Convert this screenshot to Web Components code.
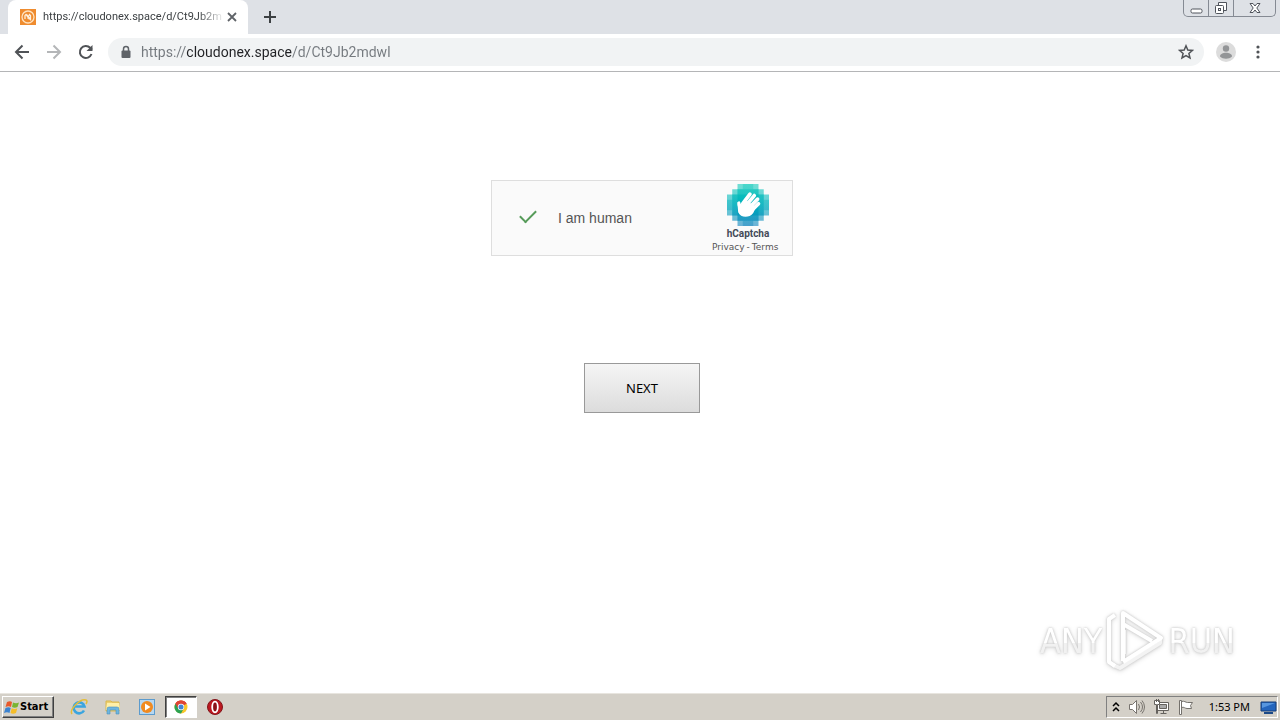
<!DOCTYPE html>
<html lang="en">
<head>
<meta charset="utf-8">
<title>https://cloudonex.space/d/Ct9Jb2mdwI</title>
<style>
html, body { margin: 0; height: 100%; }
body { font-family: "Noto Sans", "Open Sans", sans-serif; background: #fff; }
</style>
</head>
<body>
<desktop-screen></desktop-screen>

<script>
const define = (name, html) => {
  const template = document.createElement('template');
  template.innerHTML = `<style>*{box-sizing:border-box} button{font:inherit;color:inherit;padding:0;margin:0;border:0;background:none} svg{display:block;flex:none}</style>${html}`;
  customElements.define(name, class extends HTMLElement {
    constructor() {
      super();
      this.attachShadow({ mode: 'open' }).append(template.content.cloneNode(true));
    }
  });
};

define('tab-strip', `
<style>
:host { display: flex; height: 34px; background: #dee1e6; align-items: flex-start; padding-left: 8px; }
.tab { display: flex; align-items: center; width: 240px; height: 34px; background: #fff; border-radius: 8px 8px 0 0; padding: 0 8px 0 12px; }
.title { width: 180px; margin-left: 7px; font: 11px/16px "Roboto", sans-serif; color: #3c4043; white-space: nowrap; -webkit-mask-image: linear-gradient(90deg, #000 155px, transparent 182px); mask-image: linear-gradient(90deg, #000 155px, transparent 182px); }
.close { width: 16px; height: 16px; margin-left: 1px; }
.new { width: 28px; height: 34px; margin-left: 8px; padding: 0 8px; }
.window { display: flex; height: 17px; margin-left: auto; margin-right: 4px; border: 1px solid #858a93; border-top: 0; border-radius: 0 0 5px 5px; color: #50545c; }
.window button { height: 16px; width: 25px; display: grid; place-items: center; }
.window button:first-child { width: 24px; }
.window button + button { border-left: 1px solid #858a93; }
.window button:last-child { width: 42px; }
</style>
<div class="tab">
  <svg width="16" height="16" viewBox="0 0 16 16"><rect width="16" height="16" fill="#ef8c2f"/><circle cx="8" cy="8" r="6" fill="none" stroke="#ffe3c0" stroke-width="1.3"/><path d="M5 10V6.500l1-1 3.500 5M6.500 5.500l4 5V6.500l-1-1-2 4" fill="none" stroke="#fff0dc" stroke-width="1.3"/></svg>
  <span class="title">https://cloudonex.space/d/Ct9Jb2m</span>
  <button class="close" aria-label="Close tab"><svg width="16" height="16"><path d="M4 4l8 8M12 4l-8 8" stroke="#5f6368" stroke-width="1.8"/></svg></button>
</div>
<button class="new" aria-label="New tab"><svg width="12" height="12"><path d="M6 0v12M0 6h12" stroke="#3c4043" stroke-width="2"/></svg></button>
<div class="window">
  <button aria-label="Minimize"><svg width="13" height="14"><rect x="1" y="8" width="11" height="4" rx="1.500" fill="#fff" stroke="currentColor"/></svg></button>
  <button aria-label="Restore"><svg width="14" height="14"><path d="M4.500 4V1.500h8v8H10" fill="#fff" stroke="currentColor"/><rect x="1.500" y="4.500" width="8" height="8" rx="1" fill="#fff" stroke="currentColor"/><rect x="4.500" y="7.500" width="2" height="2" fill="none" stroke="currentColor"/></svg></button>
  <button aria-label="Close"><svg width="12" height="12"><path d="M1 1.500h3l2 2.500 2-2.500h3L7.800 6 11 10.500H8L6 8l-2 2.500H1L4.200 6z" fill="#fff" stroke="currentColor"/></svg></button>
</div>`);

define('address-bar', `
<style>
:host { display: flex; align-items: center; height: 38px; background: #fff; border-bottom: 1px solid #b4b5b7; padding: 0 13px 2px 14px; }
.nav { width: 16px; height: 16px; margin-right: 16px; }
.reload { margin-right: 14px; }
.box { flex: 1; display: flex; align-items: center; height: 28px; border-radius: 14px; background: #f1f3f4; padding: 0 10px 0 12px; }
input { flex: 1; min-width: 0; height: 24px; margin: 0 0 0 9px; padding: 0; border: 0; outline: 0; font: 14px/20px "Roboto", sans-serif; color: #5f6368; background: linear-gradient(90deg, #74797e 45px, #202124 45px 151px, #74797e 151px); -webkit-background-clip: text; background-clip: text; -webkit-text-fill-color: transparent; }
.avatar { margin: 0 13px 0 12px; }
</style>
<button class="nav" aria-label="Back"><svg width="16" height="16"><path d="M15 8H2M8.500 1.500L2 8l6.500 6.500" fill="none" stroke="#505357" stroke-width="2"/></svg></button>
<button class="nav" aria-label="Forward"><svg width="16" height="16"><path d="M1 8h13M7.500 1.500L14 8l-6.500 6.500" fill="none" stroke="#b4b6b8" stroke-width="2"/></svg></button>
<button class="nav reload" aria-label="Reload"><svg width="16" height="16"><path d="M13.500 10A6 6 0 1 1 12.200 3.800L14 5.600" fill="none" stroke="#505357" stroke-width="2"/><path d="M14.500 1v6h-6z" fill="#505357"/></svg></button>
<div class="box">
  <svg width="12" height="14"><path d="M3.500 6V4a2.500 2.500 0 0 1 5 0v2" fill="none" stroke="#5f6368" stroke-width="1.500"/><rect x="1.500" y="5.500" width="9" height="7.500" rx="1" fill="#5f6368"/></svg>
  <input type="text" aria-label="Address" value="https://cloudonex.space/d/Ct9Jb2mdwI" spellcheck="false">
  <button aria-label="Bookmark"><svg width="16" height="16"><path d="M8 1.800l1.800 4.200 4.600.4-3.500 3 1.100 4.500L8 11.500l-4 2.400 1.100-4.500-3.500-3 4.600-.4z" fill="none" stroke="#505357" stroke-width="1.500"/></svg></button>
</div>
<button class="avatar" aria-label="Profile"><svg width="20" height="20"><circle cx="10" cy="10" r="10" fill="#dcdcdc"/><circle cx="10" cy="6.500" r="3.200" fill="#939597"/><path d="M4 14.500c0-5 12-5 12 0-3 3-9 3-12 0z" fill="#939597"/></svg></button>
<button aria-label="Menu"><svg width="18" height="16" fill="#505357"><circle cx="9" cy="3" r="1.600"/><circle cx="9" cy="8" r="1.600"/><circle cx="9" cy="13" r="1.600"/></svg></button>`);

define('captcha-logo', `
<style>:host { display: block; }</style>
<svg width="42" height="42" viewBox="0 0 32 32">
  <defs><linearGradient id="g" x1="0" y1="0" x2="0" y2="32" gradientUnits="userSpaceOnUse"><stop offset="0" stop-color="#13cdbb"/><stop offset=".5" stop-color="#00afbd"/><stop offset="1" stop-color="#0f82bd"/></linearGradient></defs>
  <g fill="url(#g)">
    <path d="M8 0h16v4h4v4h4v16h-4v4h-4v4H8v-4H4v-4H0V8h4V4h4z" opacity=".6"/>
    <path d="M12 0h8v4h4v4h4v4h4v8h-4v4h-4v4h-4v4h-8v-4H8v-4H4v-4H0v-8h4V8h4V4h4z" opacity=".4"/>
    <path d="M8 4h16v4h4v16h-4v4H8v-4H4V8h4z" opacity=".6"/>
    <path d="M8 8h16v16H8z"/>
  </g>
  <g fill="none" stroke="#fff" stroke-linecap="round" stroke-width="2.800">
    <path d="M12 15L17.500 7.800M14 17L20.800 8.800M16 19L23.300 11.500M18 21L24 15"/>
    <path d="M10.500 21L9 14.500" stroke-width="2.500"/>
  </g>
  <path d="M11 15.500l4-3 7 5-2 4.500c-3 4-9.500 4-11.500-.5l-.5-6 2-.5z" fill="#fff"/>
</svg>`);

define('captcha-box', `
<style>
:host { display: flex; width: 302px; height: 76px; border: 1px solid #dedede; background: #fafafa; align-items: center; padding: 0 8px 0 26px; color: #555; }
input { appearance: none; width: 20px; height: 20px; margin: 0 20px 0 0; display: grid; place-items: center; }
input:checked::before { content: ""; width: 14px; height: 7px; border: solid #569b59; border-width: 0 0 2px 2px; transform: translateY(-4px) rotate(-45deg); }
label { font: 14px/20px "Liberation Sans", sans-serif; }
.brand { margin-left: auto; width: 72px; padding-top: 1px; display: flex; flex-direction: column; align-items: center; }
strong { font: bold 10px/15px "Roboto", sans-serif; color: #444a58; }
nav { display: flex; gap: 2px; align-self: flex-start; font: 9px/12px "DejaVu Sans", sans-serif; }
a { color: inherit; text-decoration: none; }
</style>
<input id="human" type="checkbox" checked>
<label for="human">I am human</label>
<div class="brand"><captcha-logo></captcha-logo><strong>hCaptcha</strong>
<nav><a href="#privacy">Privacy</a><span>-</span><a href="#terms">Terms</a></nav></div>`);

define('any-run', `
<style>
:host { display: flex; align-items: center; gap: 4px; font: 34px/60px "DejaVu Sans Condensed", "DejaVu Sans", sans-serif; filter: drop-shadow(0 0 1px #c4c4c4) drop-shadow(0 1px 2px #ddd); }
span { color: #fff; background: linear-gradient(#fff 32px, #f1f1f1 32px); -webkit-background-clip: text; background-clip: text; -webkit-text-fill-color: transparent; }
</style>
<span>ANY</span>
<svg width="58" height="62" viewBox="0 0 58 62" fill="none" stroke="#fff" stroke-width="4" stroke-linejoin="round">
  <path d="M54 28v5L14 58l-7-3M18 44V20" stroke="#f3f3f3"/>
  <path d="M17 51V3l38 25-38 24M17 14l29 17M9 5L3 9v43l6 4"/>
</svg>
<span>RUN</span>`);

define('web-page', `
<style>
:host { display: flex; flex: 1; min-height: 0; flex-direction: column; align-items: center; position: relative; padding: 108px 0 0 4px; background: #fff; }
.next { width: 116px; height: 50px; margin-top: 107px; border: 1px solid #999; background: linear-gradient(#f5f5f5, #dcdcdc); font: 13px/18px "Noto Sans", sans-serif; color: #000; }
any-run { position: absolute; right: 45px; bottom: 21px; }
</style>
<captcha-box></captcha-box>
<button class="next">NEXT</button>
<any-run></any-run>`);

define('task-bar', `
<style>
:host { display: flex; align-items: center; height: 27px; padding: 0 2px; background: #d4d0c8; border-top: 1px solid #e8e5df; font-size: 11px; line-height: 16px; color: #000; }
.start { display: flex; align-items: center; width: 52px; height: 22px; padding-left: 1px; border: 1px solid; border-color: #fff #404040 #404040 #fff; box-shadow: inset -1px -1px #808080; font: bold 11px/16px "DejaVu Sans Condensed", "DejaVu Sans", sans-serif; }
.apps { display: flex; margin-left: 9px; }
.apps button { width: 32px; height: 22px; margin-right: 2px; display: grid; place-items: center; }
.apps .on { border: 1px solid; border-color: #404040 #fff #fff #404040; background: #fff; box-shadow: inset 1px 1px #808080; }
.tray { display: flex; align-items: center; height: 22px; margin-left: auto; gap: 8px; padding: 0 0 0 5px; border: 1px solid; border-color: #808080 #fff #fff #808080; }
.tray time { margin: 0 2px 0 7px; }
</style>
<button class="start"><svg width="16" height="16"><path d="M3 3c2-1 4-1 5 0L7 8C5 7 4 7 1.500 8z" fill="#e8592b"/><path d="M9 3.500c2 1 4 1 6 0L13.500 8C12 9 9.500 9 8 8z" fill="#79b431"/><path d="M1.500 9c2-1 4-1 5.200 0L5.500 14C4 13 2 13 0 14z" fill="#3c83d0"/><path d="M7.700 9.300c2 1 4 1 5.600 0L12 14c-2 1-4 1-5.500 0z" fill="#f5bd28"/></svg>Start</button>
<div class="apps">
  <button aria-label="Internet Explorer"><svg width="18" height="18"><path d="M14 12.500A5.500 5.500 0 1 1 14.500 8.500H5" fill="none" stroke="#3ba5df" stroke-width="2.600"/><path d="M2 16C-1 12 10 0 16 2c1.500.5 1 2.500 0 4" fill="none" stroke="#e4bd38" stroke-width="1.500"/></svg></button>
  <button aria-label="Explorer"><svg width="18" height="18"><path d="M2 3h5l1 1h7v9H2z" fill="#edcf70" stroke="#d9b84e"/><path d="M3 5h12l1 7H2z" fill="#fff0a8"/><path d="M3 16v-5q0-2 2-2h8q2 0 2 2v5h-3v-4H6v4z" fill="#6eb6df" stroke="#4b91bd" stroke-width=".6"/></svg></button>
  <button aria-label="Media Player"><svg width="18" height="18"><rect x="1.500" y="1.500" width="15" height="15" fill="#b6d7f1" stroke="#5c9bcd"/><circle cx="9" cy="9" r="6" fill="#f08a20"/><path d="M7 5.500v7L12.500 9z" fill="#fff"/></svg></button>
  <button class="on" aria-label="Chrome"><svg width="14" height="14"><circle cx="7" cy="7" r="6.500" fill="#f9c72b"/><path d="M7 7L1.370 3.750A6.500 6.500 0 0 1 12.630 3.750z" fill="#df4536"/><path d="M7 7L1.370 3.750A6.500 6.500 0 0 0 7 13.500L10 8z" fill="#2ba252"/><path d="M7 3.750h5.630A6.500 6.500 0 0 0 1.370 3.750L4.200 8.600z" fill="#df4536"/><circle cx="7" cy="7" r="3.200" fill="#fff"/><circle cx="7" cy="7" r="2.500" fill="#4285d5"/></svg></button>
  <button aria-label="Opera"><svg width="16" height="16"><circle cx="8" cy="8" r="7.500" fill="#bd1820" stroke="#81151a"/><ellipse cx="8" cy="8" rx="2.800" ry="5.300" fill="#8b1016" stroke="#fff" stroke-width="1.800"/></svg></button>
</div>
<div class="tray">
  <button aria-label="Show hidden icons"><svg width="8" height="12"><path d="M1 5l3-3 3 3M1 10l3-3 3 3" fill="none" stroke="#000" stroke-width="1.500"/></svg></button>
  <svg width="17" height="16" fill="#fff" stroke="#77736e"><path d="M1.500 5.500h3l4-4v13l-4-4h-3z"/><path d="M10.500 5q2 3 0 6M12.500 3q4 5 0 10M14 1.500q5 6.500 0 13" fill="none"/></svg>
  <svg width="17" height="16" fill="#fff" stroke="#65625e"><path d="M4.500 3.500h11v8h-11zM7.500 14.500h6M10.500 11.500v3"/><path d="M6.500 5.500h7v4h-7z" fill="#aaa"/><path d="M1.500 1.500h5v4h-2v9h-1v-9h-2zM3.500 0v3M5.500 0v3"/></svg>
  <svg width="16" height="16" fill="#fff" stroke="#74716c"><path d="M1.500 1.500h2v14h-2zM3.500 2.500c3-1 4 1 6 1h5l-2 3 1 3H9c-2 0-3-2-5.500-1z"/></svg>
  <time>1:53 PM</time>
  <button aria-label="Show desktop"><svg width="17" height="16"><path d="M1 3h15v9H1z" fill="#2465bd" stroke="#163f79"/><path d="M2 4h13L2 9z" fill="#5796df"/><path d="M4 14h9" stroke="#1c4a88" stroke-width="2"/></svg></button>
</div>`);

define('desktop-screen', `
<style>:host { display: flex; flex-direction: column; min-height: 100vh; }</style>
<tab-strip></tab-strip><address-bar></address-bar><web-page></web-page><task-bar></task-bar>`);
</script>
</body>
</html>
